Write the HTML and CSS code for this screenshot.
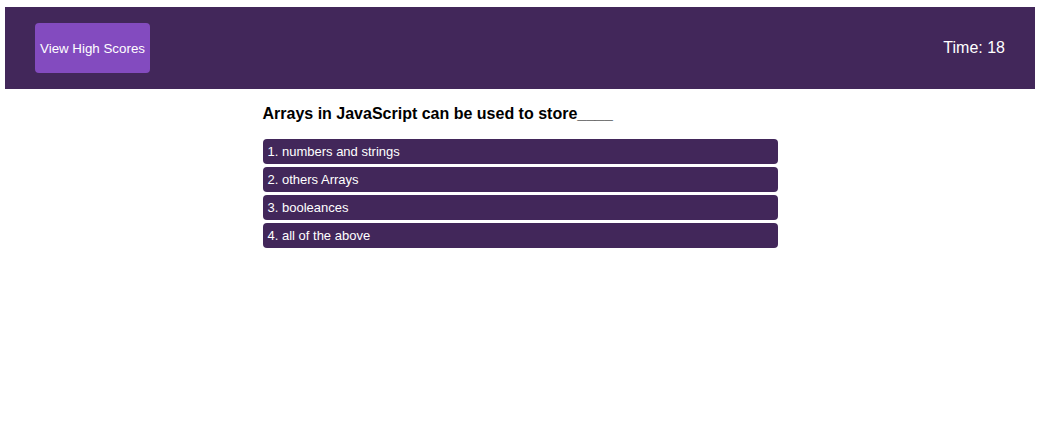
FILE: index.html
```html
<!DOCTYPE html>
<html>
<head>
<meta charset="utf-8">
<link rel="stylesheet" href="styles.css">
</head>
<body>
<header class="top">
  <button class="scores">View High Scores</button>
  <div class="timer">Time: 18</div>
</header>
<main class="quiz">
  <h2 class="question">Arrays in JavaScript can be used to store____</h2>
  <div class="choices">
    <button class="choice">1. numbers and strings</button>
    <button class="choice">2. others Arrays</button>
    <button class="choice">3. booleances</button>
    <button class="choice">4. all of the above</button>
  </div>
</main>
</body>
</html>
```
FILE: styles.css
```css
body {
  margin: 0;
  font-family: "Liberation Sans", Arial, sans-serif;
  background: #fff;
}
.top {
  margin: 7px 5px 0;
  height: 82px;
  background: #42275a;
  display: flex;
  align-items: center;
  justify-content: space-between;
  padding: 0 30px;
  box-sizing: border-box;
}
.scores {
  width: 115px;
  height: 50px;
  background: #834bbf;
  color: #fff;
  border: none;
  border-radius: 4px;
  font-family: "Liberation Sans", Arial, sans-serif;
  font-size: 13.3333px;
  padding: 0;
}
.timer {
  color: #fff;
  font-size: 16px;
}
.quiz {
  width: 515px;
  margin: 0 auto;
  padding-top: 15px;
}
.question {
  margin: 0 0 15px;
  font-size: 16px;
  line-height: 20px;
  font-weight: bold;
  color: #000;
}
.choices {
  display: flex;
  flex-direction: column;
  gap: 3px;
}
.choice {
  height: 25px;
  background: #42275a;
  color: #fff;
  border: none;
  border-radius: 4px;
  text-align: left;
  padding: 0 5px;
  font-family: "Liberation Sans", Arial, sans-serif;
  font-size: 13px;
}
```
